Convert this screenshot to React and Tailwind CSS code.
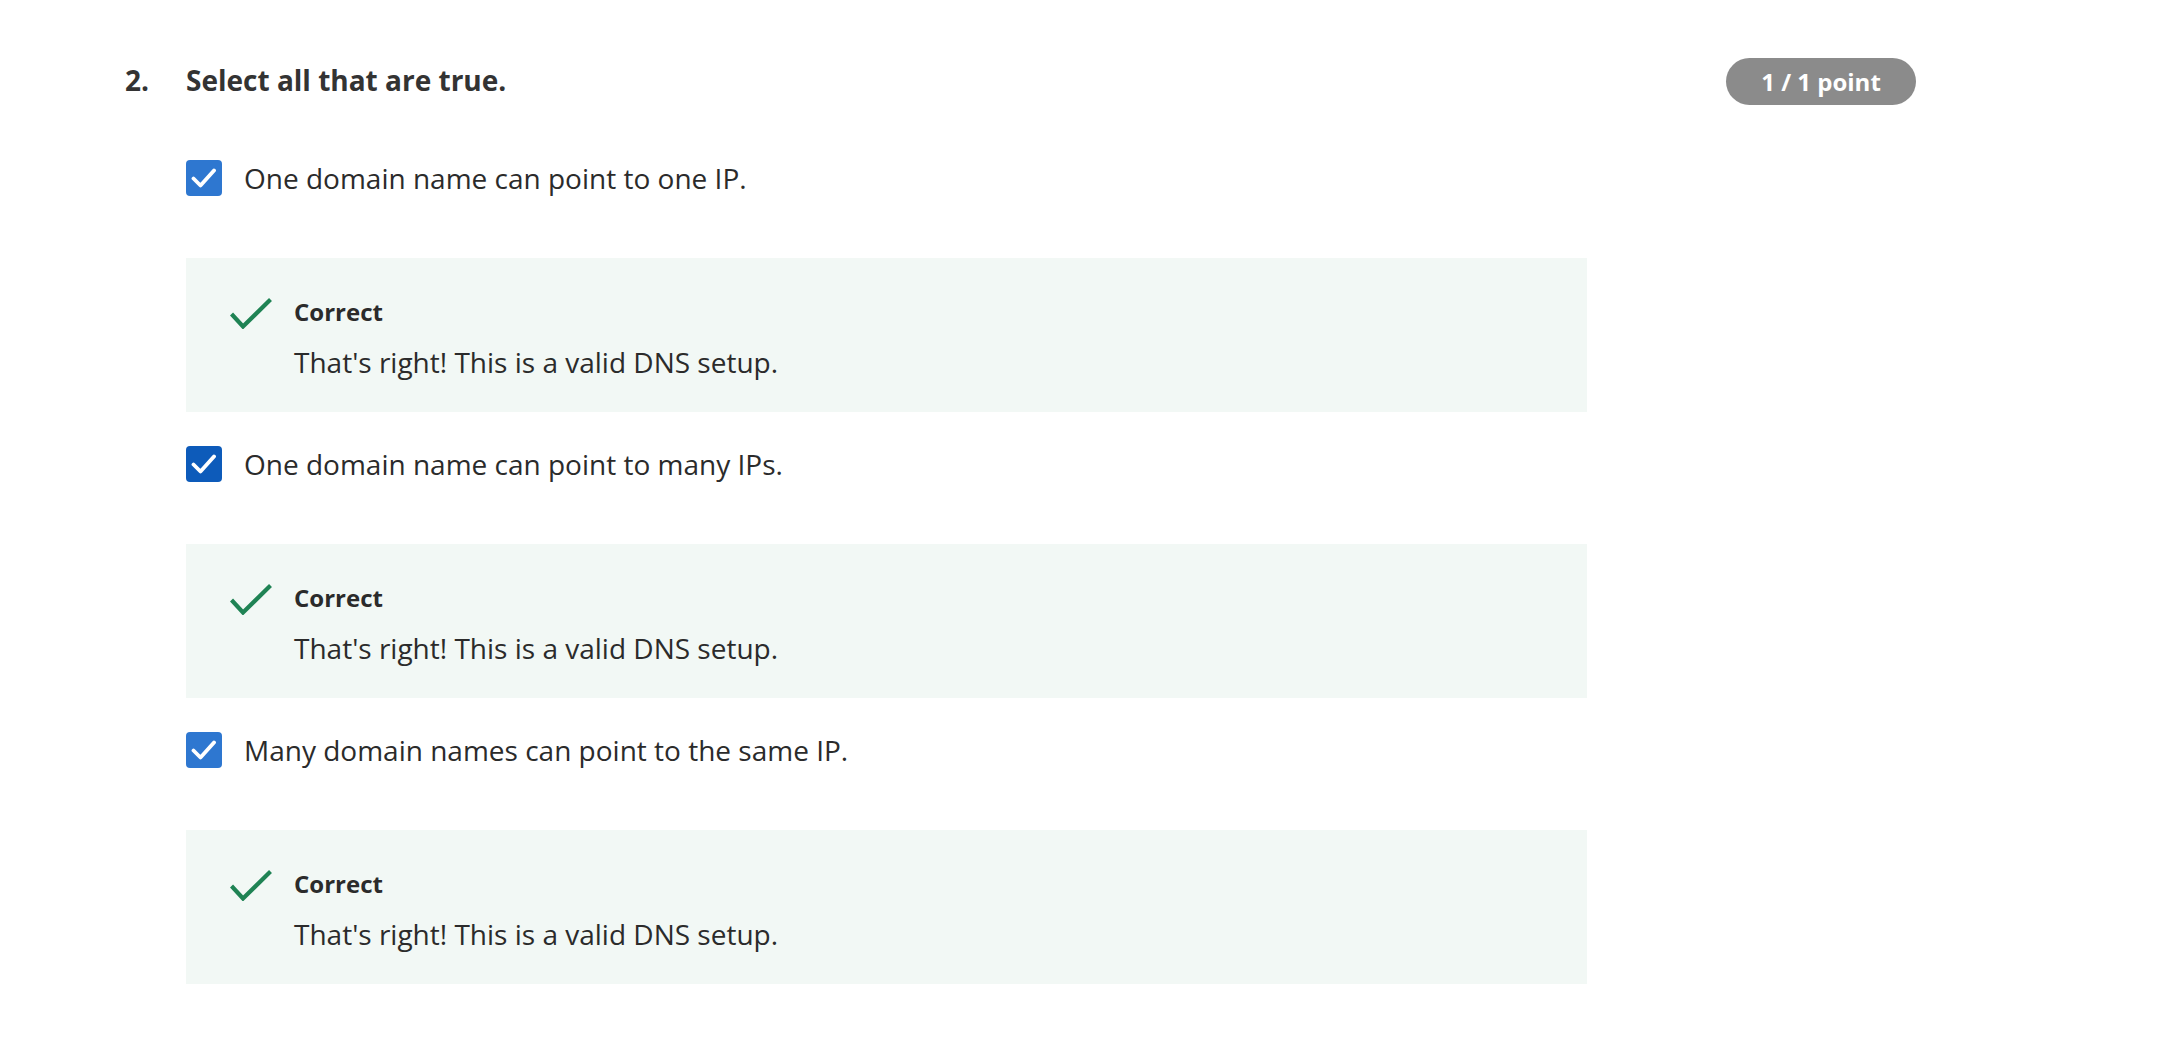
import React from "react";

function CheckBox({ dark }) {
  return (
    <div className={`w-[36px] h-[36px] rounded-[4px] flex items-center justify-center shrink-0 ${dark ? "bg-[#0d5bba]" : "bg-[#2e77d0]"}`}>
      <svg width="26" height="22" viewBox="0 0 26 22" fill="none">
        <polyline points="2.5,11.5 9.5,18.5 23,3.5" stroke="white" strokeWidth="3.8" strokeLinecap="round" strokeLinejoin="round" />
      </svg>
    </div>
  );
}

function Feedback() {
  return (
    <div className="mt-[62px] h-[154px] bg-[#f2f8f5] flex items-start pl-[44px] pt-[38px]">
      <svg className="mt-[2px] shrink-0" width="42" height="31" viewBox="0 0 42 31" fill="none">
        <polyline points="1.5,16 13,28.5 40.5,1.5" stroke="#1f8354" strokeWidth="4.2" />
      </svg>
      <div className="ml-[22px] flex flex-col">
        <div className="text-[24px] leading-[32px] font-bold text-[#2b2b2b]">Correct</div>
        <div className="mt-[16px] text-[28px] leading-[36px] text-[#2b2b2b]">That's right! This is a valid DNS setup.</div>
      </div>
    </div>
  );
}

function Option({ text, dark, first }) {
  return (
    <div className={first ? "" : "mt-[34px]"}>
      <div className="flex items-center h-[36px]">
        <CheckBox dark={dark} />
        <div className="ml-[22px] text-[28px] leading-[36px] text-[#2b2b2b]">{text}</div>
      </div>
      <Feedback />
    </div>
  );
}

export default function App() {
  return (
    <div className="min-h-screen bg-white" style={{ fontFamily: '"Open Sans", "Noto Sans", sans-serif' }}>
      <div className="pl-[125px] pt-[58px] w-[1916px]">
        <div className="flex items-center h-[47px]">
          <div className="w-[61px] pb-[4px] text-[28px] font-bold text-[#333333]">2.</div>
          <div className="flex-1 pb-[4px] text-[28px] font-bold text-[#333333]">Select all that are true.</div>
          <div className="w-[190px] h-[47px] rounded-full bg-[#8b8b8b] flex items-center justify-center text-white font-bold text-[24px]">1 / 1 point</div>
        </div>
        <div className="ml-[61px] w-[1401px] mt-[55px]">
          <Option first text="One domain name can point to one IP." />
          <Option dark text="One domain name can point to many IPs." />
          <Option text="Many domain names can point to the same IP." />
        </div>
      </div>
    </div>
  );
}
